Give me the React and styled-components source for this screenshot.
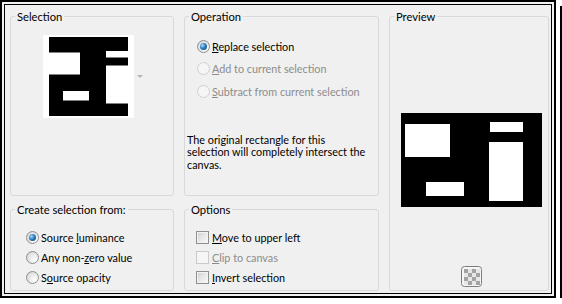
import React from "react"
import styled, { createGlobalStyle, css } from "styled-components"

const GlobalStyle = createGlobalStyle`
  body {
    margin: 0;
    background: #fff;
    font-family: Lato, "Liberation Sans", sans-serif;
    font-size: 10.8px;
    color: #000;
  }
`

const Frame = styled.div`
  width: 556px;
  height: 298px;
  box-sizing: border-box;
  border: 2px solid #000;
  background: #f0f0f0;
  padding: 2px;
  box-shadow: 4px 4px 0 #fff, 6px 6px 0 #000;
`

const Dialog = styled.div`
  height: 100%;
  box-sizing: border-box;
  border: 1px solid #000;
  padding: 4px 3px 1px 5px;
  display: grid;
  grid-template-columns: 164px 195px 160px;
  grid-template-rows: 187px 89px;
  column-gap: 10px;
  row-gap: 6px;
`

const Group = styled.fieldset`
  margin: 0;
  padding: 0;
  min-width: 0;
  border: 1px solid #d9d9d9;
  border-radius: 3px;
  grid-column: ${(props) => props.$col};
  grid-row: ${(props) => props.$row};
`

const Legend = styled.legend`
  margin-left: 4px;
  padding: 0 2px;
  line-height: 15px;
  font-size: 11.2px;
`

const SelectionBody = styled.div`
  display: flex;
  align-items: center;
  gap: 3px;
  padding: 11px 0 0 32px;
`

const Thumb = styled.div`
  background: #fff;
  padding: 2px 6px;
  line-height: 0;
`

const DropArrow = styled.span`
  width: 0;
  height: 0;
  border-left: 3px solid transparent;
  border-right: 3px solid transparent;
  border-top: 3px solid #b4b4b4;
`

const OperationBody = styled.div`
  padding: 11px 0 0 2px;
`

const OptionList = styled.div`
  display: flex;
  flex-direction: column;
  padding: ${(props) => props.$pad};
`

const OptionRow = styled.label`
  display: flex;
  align-items: center;
  gap: ${(props) => props.$gap || "2px"};
  height: ${(props) => props.$h || "22.5px"};
  color: ${(props) => (props.$disabled ? "#8c8c8c" : "#000")};
  white-space: nowrap;
`

const Radio = styled.span`
  display: grid;
  place-items: center;
  flex-shrink: 0;
  width: 13px;
  height: 13px;
  box-sizing: border-box;
  border-radius: 50%;
  border: 1px solid ${(props) => (props.$disabled ? "#d0d0d0" : "#8e8f8f")};
  background: ${(props) =>
    props.$disabled
      ? "#f5f5f5"
      : "radial-gradient(circle at 70% 70%, #ffffff 0%, #e6e6e6 55%, #cfcfcf 100%)"};
  ${(props) =>
    props.$checked &&
    css`
      &::after {
        content: "";
        width: 7px;
        height: 7px;
        border-radius: 50%;
        background: radial-gradient(circle at 35% 35%, #a8dcf8 0%, #2d7fbf 45%, #0e3a66 100%);
      }
    `}
`

const Check = styled.span`
  flex-shrink: 0;
  width: 13px;
  height: 13px;
  box-sizing: border-box;
  border: 1px solid ${(props) => (props.$disabled ? "#cbcbcb" : "#8e8f8f")};
  box-shadow: inset 0 0 0 1px #f4f4f4;
  background: ${(props) =>
    props.$disabled ? "#f5f5f5" : "linear-gradient(135deg, #cbcfd5 0%, #e9e9e9 55%, #fafafa 100%)"};
`

const Note = styled.p`
  margin: 31px 0 0;
  line-height: 12.5px;
  white-space: nowrap;
`

const PreviewBody = styled.div`
  display: flex;
  flex-direction: column;
  align-items: flex-start;
  padding: 89px 0 0 11px;
`

const TransparencyButton = styled.svg`
  margin: 59px 0 0 60px;
`

const SelectionThumb = () => (
  <svg width="79" height="79" viewBox="0 0 79 79">
    <rect width="79" height="79" fill="#000" />
    <rect x="0" y="15.5" width="31" height="22" fill="#fff" />
    <rect x="14" y="54" width="26" height="9.5" fill="#fff" />
    <rect x="57" y="14" width="22" height="6.5" fill="#fff" />
    <rect x="57" y="28.5" width="22" height="38" fill="#fff" />
  </svg>
)

const PreviewImage = () => (
  <svg width="141" height="94" viewBox="0 0 141 94">
    <rect width="141" height="94" fill="#000" />
    <rect x="4" y="11" width="45" height="33" fill="#fff" />
    <rect x="89" y="9" width="33" height="10" fill="#fff" />
    <rect x="88" y="29" width="34" height="59" fill="#fff" />
    <rect x="25" y="69" width="38" height="14" fill="#fff" />
  </svg>
)

const checkerCells = []
for (let r = 0; r < 4; r++) {
  for (let c = 0; c < 4; c++) {
    checkerCells.push(
      <rect
        key={`${r}-${c}`}
        x={3 + c * 4}
        y={3 + r * 4}
        width="4"
        height="4"
        fill={(r + c) % 2 === 0 ? "#a3a3a3" : "#e6e6e6"}
      />
    )
  }
}

const App = () => (
  <>
    <GlobalStyle />
    <Frame>
      <Dialog>
        <Group $col="1" $row="1">
          <Legend>Selection</Legend>
          <SelectionBody>
            <Thumb>
              <SelectionThumb />
            </Thumb>
            <DropArrow />
          </SelectionBody>
        </Group>

        <Group $col="2" $row="1">
          <Legend>Operation</Legend>
          <OperationBody>
            <OptionList $pad="0 0 0 10px">
              <OptionRow>
                <Radio $checked />
                <span>
                  <u>R</u>eplace selection
                </span>
              </OptionRow>
              <OptionRow $disabled>
                <Radio $disabled />
                <span>
                  <u>A</u>dd to current selection
                </span>
              </OptionRow>
              <OptionRow $disabled>
                <Radio $disabled />
                <span>
                  <u>S</u>ubtract from current selection
                </span>
              </OptionRow>
            </OptionList>
            <Note>
              The original rectangle for this
              <br />
              selection will completely intersect the
              <br />
              canvas.
            </Note>
          </OperationBody>
        </Group>

        <Group $col="3" $row="1 / span 2">
          <Legend>Preview</Legend>
          <PreviewBody>
            <PreviewImage />
            <TransparencyButton width="21" height="21" viewBox="0 0 21 21">
              <rect x="0.5" y="0.5" width="20" height="20" rx="3" fill="#f7f7f7" stroke="#7c7c7c" />
              {checkerCells}
            </TransparencyButton>
          </PreviewBody>
        </Group>

        <Group $col="1" $row="2">
          <Legend>Create selection from:</Legend>
          <OptionList $pad="10px 0 0 15px">
            <OptionRow $h="20px">
              <Radio $checked />
              <span>
                Source <u>l</u>uminance
              </span>
            </OptionRow>
            <OptionRow $h="20px">
              <Radio />
              <span>
                Any non-<u>z</u>ero value
              </span>
            </OptionRow>
            <OptionRow $h="20px">
              <Radio />
              <span>
                S<u>o</u>urce opacity
              </span>
            </OptionRow>
          </OptionList>
        </Group>

        <Group $col="2" $row="2">
          <Legend>Options</Legend>
          <OptionList $pad="10px 0 0 11px">
            <OptionRow $h="20px" $gap="3px">
              <Check />
              <span>
                <u>M</u>ove to upper left
              </span>
            </OptionRow>
            <OptionRow $h="20px" $gap="3px" $disabled>
              <Check $disabled />
              <span>
                <u>C</u>lip to canvas
              </span>
            </OptionRow>
            <OptionRow $h="20px" $gap="3px">
              <Check />
              <span>
                <u>I</u>nvert selection
              </span>
            </OptionRow>
          </OptionList>
        </Group>
      </Dialog>
    </Frame>
  </>
)

export default App
